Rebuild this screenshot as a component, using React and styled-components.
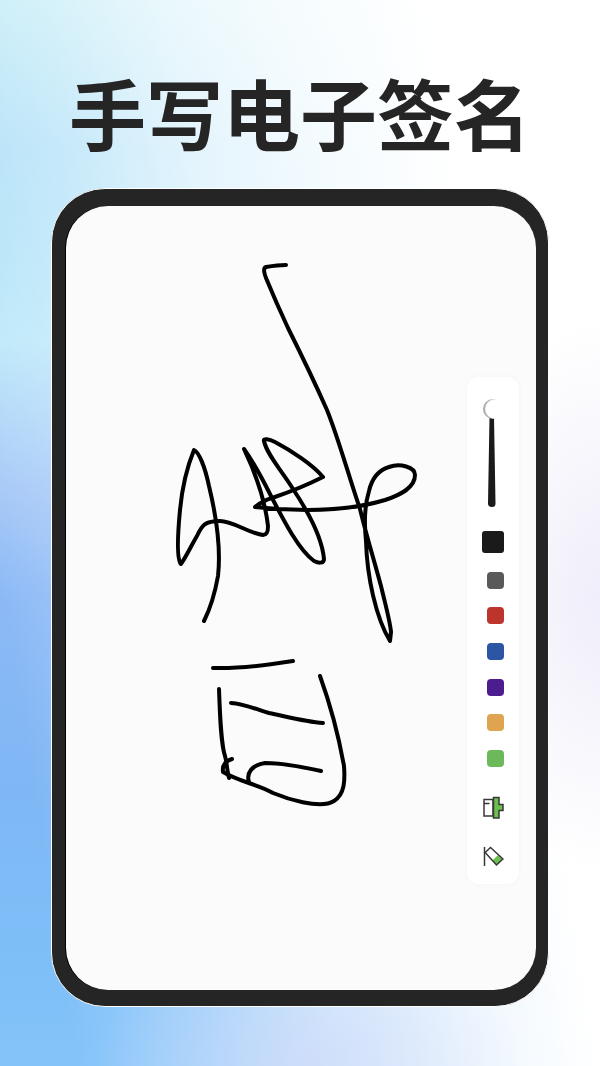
import React, { useState } from 'react';
import styled, { createGlobalStyle } from 'styled-components';

const GlobalStyle = createGlobalStyle`
  * {
    box-sizing: border-box;
  }
  body {
    margin: 0;
    font-family: 'Noto Sans CJK SC', 'Noto Sans', sans-serif;
  }
`;

const Page = styled.main`
  min-height: 100vh;
  display: flex;
  flex-direction: column;
  padding: 56px 51px 59px;
  background:
    radial-gradient(ellipse 24% 26% at 100% 56%, #efeefa 0%, rgba(239, 238, 250, 0) 100%),
    radial-gradient(ellipse 36% 12% at 52% 100%, rgba(208, 216, 248, 0.6) 0%, rgba(208, 216, 248, 0) 100%),
    linear-gradient(
      81deg,
      rgba(255, 255, 255, 0) 10%,
      rgba(255, 255, 255, 0.3) 28%,
      rgba(255, 255, 255, 0.65) 44%,
      rgba(255, 255, 255, 0.85) 60%,
      #ffffff 78%
    ),
    linear-gradient(
      180deg,
      #c4ecf7 0%,
      #b0e0f8 14%,
      #b4e4f8 24%,
      #bbe8f9 32%,
      #b2daf9 38%,
      #a5c8f7 46%,
      #8cb9f6 56%,
      #7fb7f5 74%,
      #7ebff8 90%,
      #84c3fa 100%
    );
`;

const Title = styled.h1`
  margin: 0;
  color: #252525;
  font-size: 77px;
  font-weight: 700;
  line-height: 112px;
  text-align: center;
  white-space: nowrap;
`;

const Device = styled.section`
  flex: 1;
  display: flex;
  margin-top: 20px;
  border: 1px solid #ffffff;
  border-radius: 54px;
  padding: 17px 12px 16px 14px;
  background: #252525;
`;

const Screen = styled.div`
  flex: 1;
  display: flex;
  justify-content: space-between;
  align-items: flex-start;
  padding: 50px 17px 50px 102px;
  border-radius: 42px;
  background: #fbfbfb;
  box-shadow: -1px 0 0 #000000;
`;

const Drawing = styled.svg`
  flex: 0 1 256px;
  min-width: 0;
  fill: none;
  stroke: #000000;
  stroke-width: 4;
  stroke-linecap: round;
  stroke-linejoin: round;
`;

const Toolbar = styled.div`
  display: flex;
  flex-direction: column;
  align-items: flex-end;
  width: 52px;
  margin-top: 121px;
  padding: 22px 15px 17px 0;
  border-radius: 12px;
  background: #ffffff;
  box-shadow: 0 0 6px rgba(0, 0, 0, 0.03);
`;

const WidthControl = styled.label`
  display: grid;
  width: 22px;
  height: 108px;

  > * {
    grid-area: 1 / 1;
  }
`;

const WidthSlider = styled.input`
  appearance: none;
  writing-mode: vertical-lr;
  width: 22px;
  height: 108px;
  margin: 0;
  background: transparent;
  cursor: pointer;

  &::-webkit-slider-thumb {
    appearance: none;
    width: 20px;
    height: 20px;
    border-radius: 50%;
    background: #ffffff;
    box-shadow: inset 2px 0 1px rgba(0, 0, 0, 0.35);
  }
`;

const Palette = styled.div`
  display: flex;
  flex-direction: column;
  align-items: flex-end;
  justify-content: space-between;
  height: 236px;
  margin: 24px 0 29px;
`;

const Swatch = styled.input`
  appearance: none;
  width: 17px;
  height: 17px;
  margin: 0;
  border-radius: 4px;
  background: ${({ $color }) => $color};
  cursor: pointer;

  &:checked {
    width: 22px;
    height: 22px;
    border-radius: 3px;
  }
`;

const ToolButton = styled.button`
  display: block;
  padding: 0;
  border: 0;
  background: none;
  cursor: pointer;

  & + & {
    margin-top: 26px;
  }

  svg {
    display: block;
  }
`;

const colors = [
  { name: '黑色', value: '#1a1a1a' },
  { name: '灰色', value: '#595959' },
  { name: '红色', value: '#bd342c' },
  { name: '蓝色', value: '#2b56a4' },
  { name: '紫色', value: '#4c1d8f' },
  { name: '橙色', value: '#dea44f' },
  { name: '绿色', value: '#6cb95b' },
];

// Rotated handwriting, one path per pen stroke
const strokes = [
  'M286 265 C279 265 272 266 266 267 C263 268 264 273 266 278 C273 295 281 313 288 328 C301 354 315 383 327 410 C339 440 348 474 360 509 C366 534 374 560 381 586 C386 607 390 621 391 632 L390 641 C376 618 367 577 366 541 C364 522 365 504 369 491 C372 478 379 470 389 467 C400 463 415 467 415 475 C415 488 400 495 385 500 C362 507 336 510 307 510 C290 510 272 509 255 507 C260 503 264 500 272 498 C290 492 307 485 323 477 C313 465 292 451 275 442 C269 439 263 438 264 441 C267 455 282 471 293 489 C307 510 322 537 324 559 C324 564 318 563 314 561 C299 550 285 523 271 496 C263 480 254 463 244 449 C254 470 265 500 268 526 C268 532 267 535 263 535 C248 533 233 521 220 521 C205 521 202 525 197 536 C191 546 187 555 181 564 C176 559 178 531 180 510 C182 489 187 467 194 450 C199 452 205 467 209 486 C216 515 221 549 218 576 C215 593 211 607 204 621',
  'M213 668 C241 669 268 665 293 661',
  'M219 689 C220 718 221 744 225 756 C227 763 227 771 229 778',
  'M231 703 C244 704 256 709 269 713 C288 717 306 722 323 723',
  'M320 676 C329 701 339 738 344 766 C345 780 345 794 334 801 C320 810 285 798 273 793 C257 784 240 782 223 772 C222 765 226 761 232 759',
  'M249 782 C246 773 252 765 265 763 C284 763 303 767 321 771',
];

function InsertIcon() {
  return (
    <svg width="21" height="24" viewBox="0 0 21 24" fill="none" stroke="#383838" strokeWidth="1.5">
      <path d="M1 3.5H10V20H1Z M1 7.5H6.5" />
      <path d="M10.5 1.5H16V8.5H20V14.5H16V22H10.5Z" fill="#6cc04f" />
    </svg>
  );
}

function EraserIcon() {
  return (
    <svg width="21" height="21" viewBox="0 0 21 21" fill="none" stroke="#383838" strokeWidth="1.5">
      <path d="M15 9L20 13L13.5 19.5L9.5 14.5Z" fill="#6cc04f" stroke="none" />
      <path d="M1.5 1V20" />
      <path d="M2.2 6.5L7.5 1.5L20 13L13.5 19Z" />
    </svg>
  );
}

function PenToolbar() {
  const [color, setColor] = useState('#1a1a1a');
  const [size, setSize] = useState(0);

  return (
    <Toolbar>
      <WidthControl>
        <svg width="22" height="108" viewBox="0 0 22 108">
          <path d="M7.5 18H12L13.5 104.5Q13.5 108 10 108Q6 108 6 104.5Z" fill="#1a1a1a" />
        </svg>
        <WidthSlider
          type="range"
          aria-label="笔画粗细"
          value={size}
          onChange={(e) => setSize(Number(e.target.value))}
        />
      </WidthControl>
      <Palette role="radiogroup" aria-label="画笔颜色">
        {colors.map(({ name, value }) => (
          <Swatch
            key={value}
            type="radio"
            name="color"
            aria-label={name}
            $color={value}
            checked={color === value}
            onChange={() => setColor(value)}
          />
        ))}
      </Palette>
      <ToolButton aria-label="清空"><InsertIcon /></ToolButton>
      <ToolButton aria-label="橡皮擦"><EraserIcon /></ToolButton>
    </Toolbar>
  );
}

function App() {
  return (
    <>
      <GlobalStyle />
      <Page>
        <Title>手写电子签名</Title>
        <Device>
          <Screen>
            <Drawing viewBox="168 256 256 560">
              {strokes.map((d) => <path key={d} d={d} />)}
            </Drawing>
            <PenToolbar />
          </Screen>
        </Device>
      </Page>
    </>
  );
}

export default App;
